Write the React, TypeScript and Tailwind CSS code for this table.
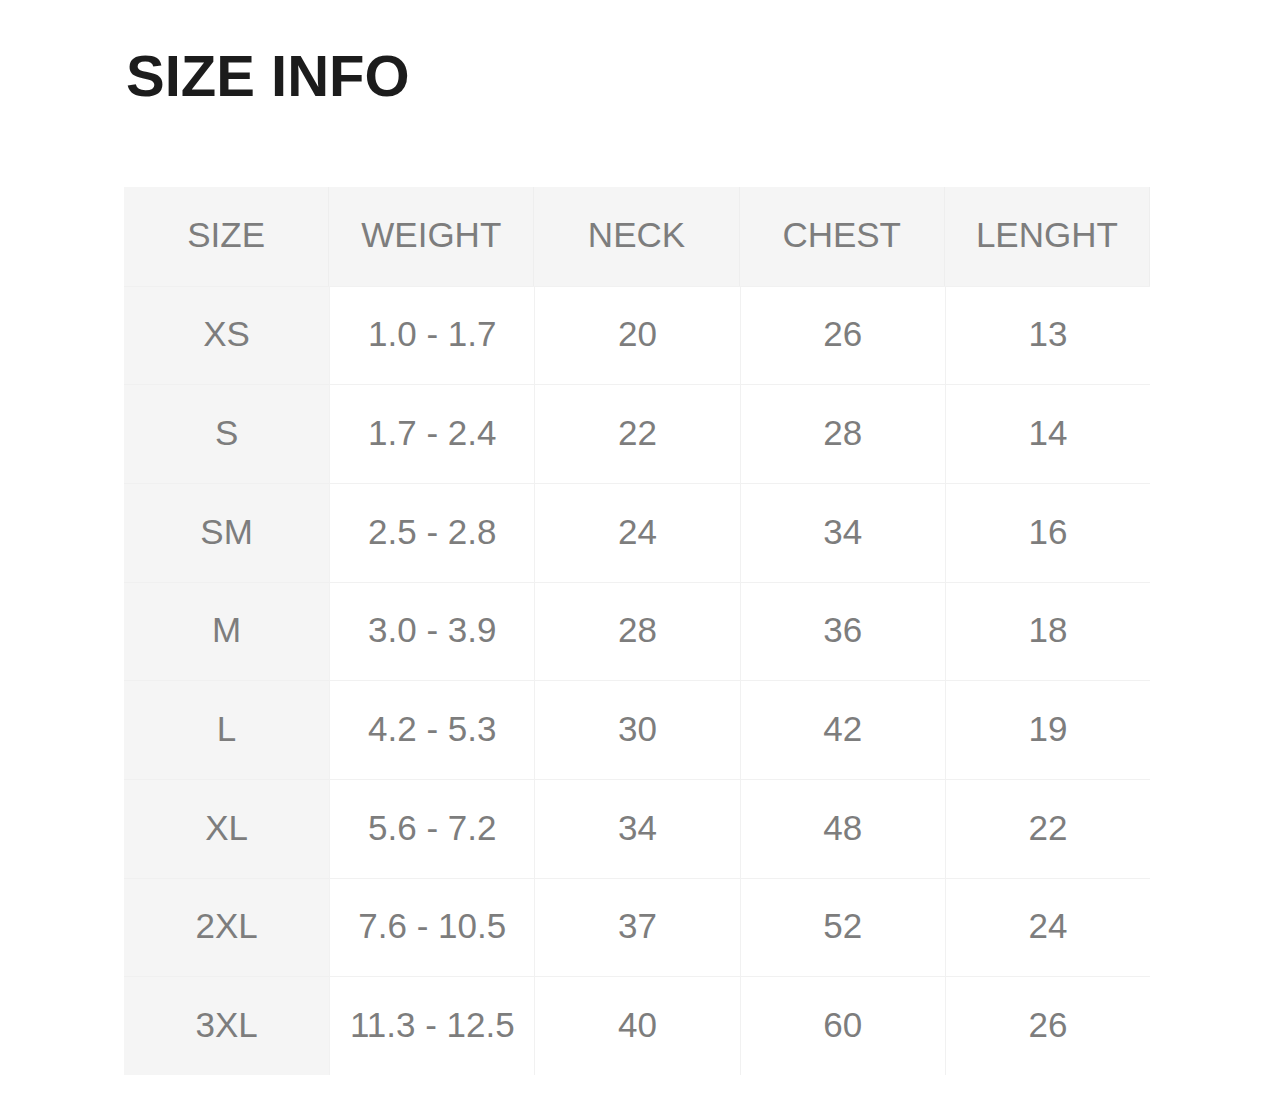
const headers = ["SIZE", "WEIGHT", "NECK", "CHEST", "LENGHT"];

const rows = [
  ["XS", "1.0 - 1.7", "20", "26", "13"],
  ["S", "1.7 - 2.4", "22", "28", "14"],
  ["SM", "2.5 - 2.8", "24", "34", "16"],
  ["M", "3.0 - 3.9", "28", "36", "18"],
  ["L", "4.2 - 5.3", "30", "42", "19"],
  ["XL", "5.6 - 7.2", "34", "48", "22"],
  ["2XL", "7.6 - 10.5", "37", "52", "24"],
  ["3XL", "11.3 - 12.5", "40", "60", "26"],
];

export default function App() {
  return (
    <div
      className="min-h-[1108px] bg-white pl-[124px] pt-[47px]"
      style={{ fontFamily: '"Liberation Sans", Arial, sans-serif' }}
    >
      <h1 className="text-[58px] leading-none font-bold text-[#1c1c1c] pl-[2px]">SIZE INFO</h1>

      <div className="mt-[82px] w-[1026px] grid grid-cols-5">
        {headers.map((h) => (
          <div
            key={h}
            className="h-[98.67px] pb-[2px] flex items-center justify-center bg-[#f5f5f5] border-r border-[#eeeeee] last:border-r-0 text-[35px] text-[#7d7d7d]"
          >
            {h}
          </div>
        ))}
        {rows.map((row) =>
          row.map((cell, i) => (
            <div
              key={row[0] + i}
              className={
                i === 0
                  ? "h-[98.67px] pb-[2px] flex items-center justify-center bg-[#f5f5f5] border-t border-[#f0f0f0] text-[35px] text-[#7d7d7d]"
                  : "h-[98.67px] pb-[2px] flex items-center justify-center bg-white border-t border-l border-[#f1f1f1] text-[35px] text-[#7d7d7d]"
              }
            >
              {cell}
            </div>
          ))
        )}
      </div>
    </div>
  );
}
